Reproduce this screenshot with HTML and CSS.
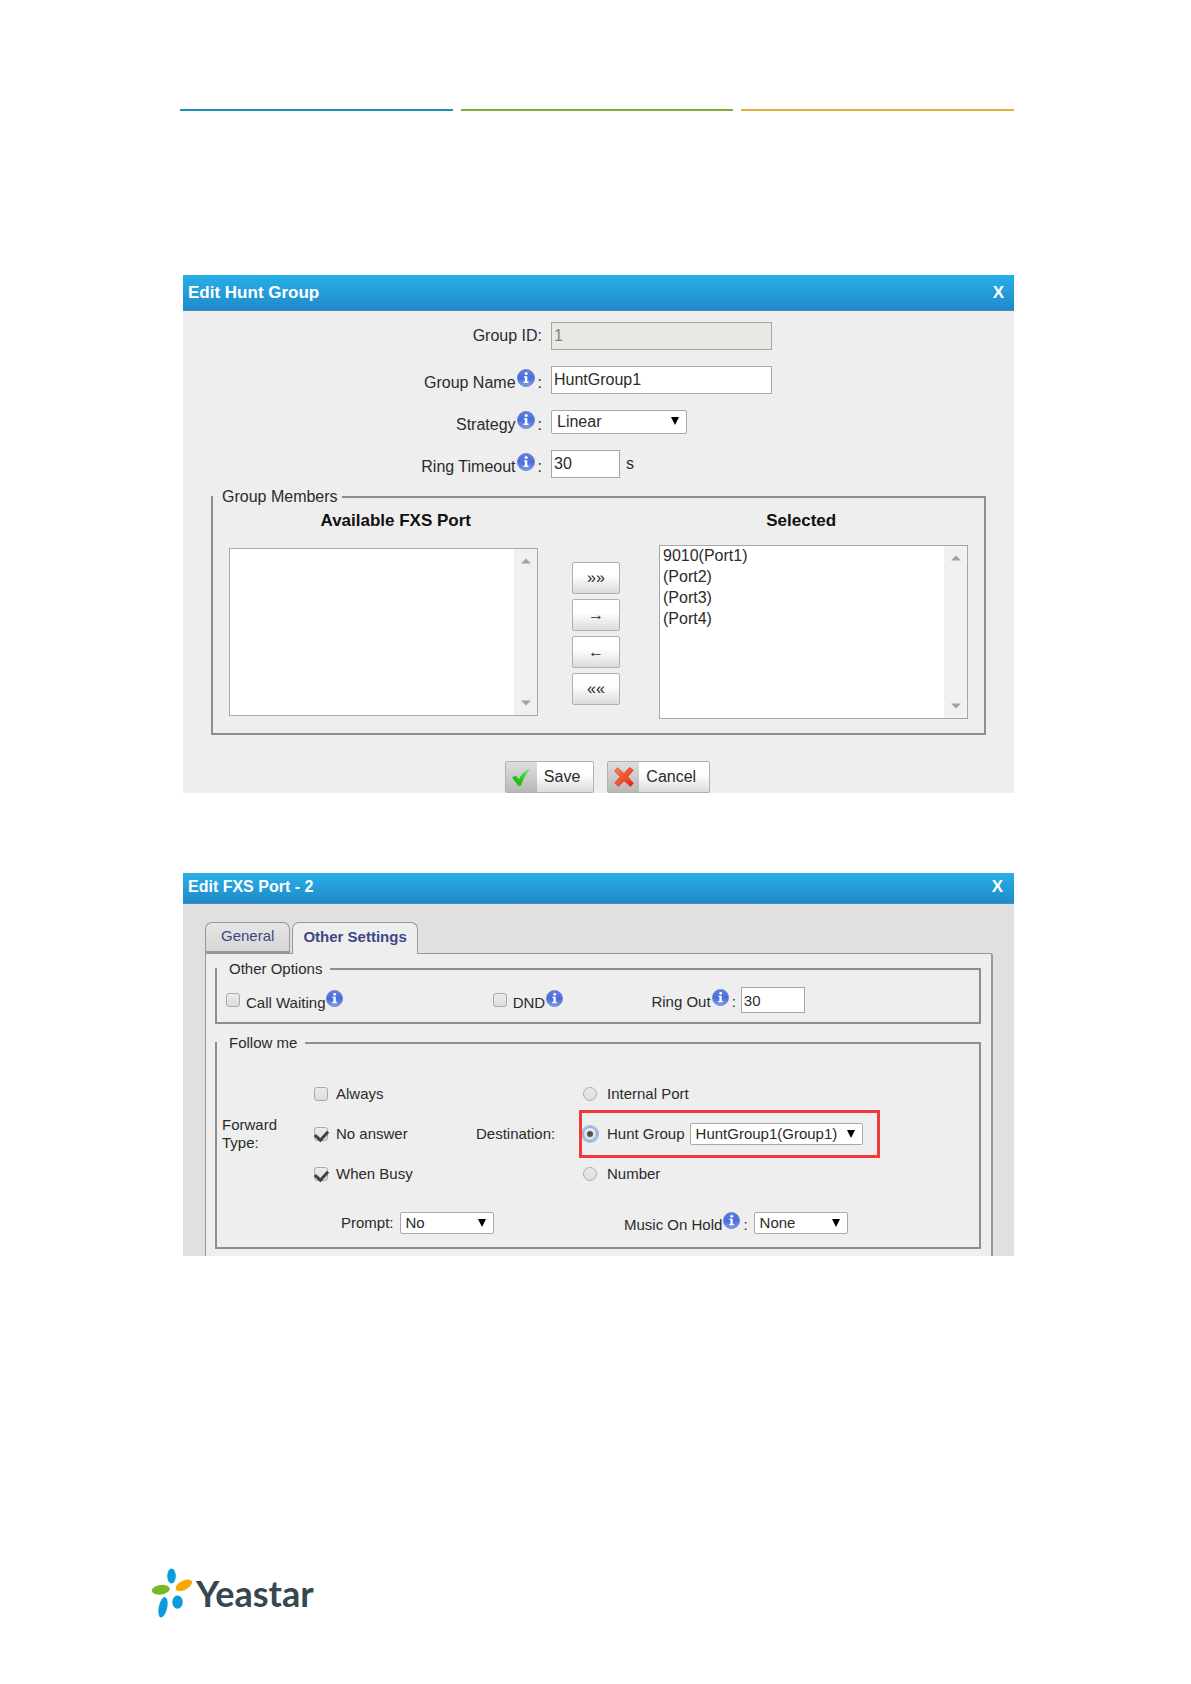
FILE: index.html
```html
<!DOCTYPE html>
<html lang="en">
<head>
    <meta charset="utf-8">
    <title>Hunt Group</title>
    <link rel="stylesheet" href="styles.css">
</head>
<body>
    <svg class="defs" aria-hidden="true">
        <defs>
            <linearGradient id="blue" x1="0" y1="0" x2="0" y2="1">
                <stop offset="0" stop-color="#5f82e6"/>
                <stop offset="0.5" stop-color="#4a6cd8"/>
                <stop offset="1" stop-color="#7f9df4"/>
            </linearGradient>
            <linearGradient id="green" x1="1" y1="0" x2="0" y2="1">
                <stop offset="0" stop-color="#8af07a"/>
                <stop offset="0.5" stop-color="#2ecb1e"/>
                <stop offset="1" stop-color="#17a90d"/>
            </linearGradient>
            <linearGradient id="red" x1="0" y1="0" x2="1" y2="1">
                <stop offset="0" stop-color="#ff8a4a"/>
                <stop offset="1" stop-color="#ea1c0a"/>
            </linearGradient>
        </defs>
        <symbol id="info" viewBox="0 0 18 18">
            <circle cx="9" cy="9" r="8.5" fill="url(#blue)" stroke="#6078c8" stroke-width="0.8"/>
            <circle cx="9.2" cy="4.6" r="1.5" fill="#fff"/>
            <path d="M6.8 7.2h3.5v5.4h1.2v1.3H6.6v-1.3h1.3V8.5H6.8z" fill="#fff"/>
        </symbol>
        <symbol id="up" viewBox="0 0 10 6"><path d="M0 5.5L5 0.5l5 5z" fill="#a3a3a3"/></symbol>
        <symbol id="down" viewBox="0 0 10 6"><path d="M0 0.5L5 5.5l5-5z" fill="#a3a3a3"/></symbol>
    </svg>

    <main class="content">
        <div class="rules">
            <span class="rule rule-blue"></span>
            <span class="rule rule-green"></span>
            <span class="rule rule-yellow"></span>
        </div>

        <section class="panel panel-group">
            <header class="panel-head">
                <h2>Edit Hunt Group</h2>
                <button type="button" class="close">X</button>
            </header>
            <form class="panel-body">
                <div class="fields">
                    <label for="groupId">Group ID:</label>
                    <div><input type="text" id="groupId" class="wide" value="1" disabled></div>
                    <label for="groupName" class="with-info">Group Name<svg class="info"><use href="#info"/></svg>:</label>
                    <div><input type="text" id="groupName" class="wide" value="HuntGroup1"></div>
                    <label for="strategy" class="with-info">Strategy<svg class="info"><use href="#info"/></svg>:</label>
                    <div class="select strategy">
                        <select id="strategy"><option>Linear</option></select>
                    </div>
                    <label for="timeout" class="with-info">Ring Timeout<svg class="info"><use href="#info"/></svg>:</label>
                    <div class="timeout"><input type="text" id="timeout" value="30"><span>s</span></div>
                </div>

                <fieldset class="members">
                    <legend>Group Members</legend>
                    <div class="list-titles">
                        <label for="available">Available FXS Port</label>
                        <label for="selected">Selected</label>
                    </div>
                    <div class="lists">
                        <div class="list list-available">
                            <select id="available" multiple></select>
                            <div class="scroll">
                                <svg><use href="#up"/></svg>
                                <svg><use href="#down"/></svg>
                            </div>
                        </div>
                        <div class="moves">
                            <button type="button">»»</button>
                            <button type="button">→</button>
                            <button type="button">←</button>
                            <button type="button">««</button>
                        </div>
                        <div class="list list-selected">
                            <select id="selected" multiple>
                                <option>9010(Port1)</option>
                                <option>(Port2)</option>
                                <option>(Port3)</option>
                                <option>(Port4)</option>
                            </select>
                            <div class="scroll">
                                <svg><use href="#up"/></svg>
                                <svg><use href="#down"/></svg>
                            </div>
                        </div>
                    </div>
                </fieldset>

                <div class="actions">
                    <button type="button">
                        <span class="icon"><svg viewBox="0 0 20 20"><path d="M1 10.5l4-2 3 4C10 8 13 4 18.5 1.5l0.5 1C15 7 12 12 10 18.5L7.5 19z" fill="url(#green)"/></svg></span>
                        <span class="text">Save</span>
                    </button>
                    <button type="button">
                        <span class="icon"><svg viewBox="0 0 20 20"><path d="M3.5 0.8L10 6.5l5.5-6 3.8 2.7-5.6 6.6 5.8 6.5-3 3.2L10 13.8 4.5 19.4 0.8 16l5.4-6.2L0.6 4z" fill="url(#red)" stroke="#c8402a" stroke-width="0.7"/></svg></span>
                        <span class="text">Cancel</span>
                    </button>
                </div>
            </form>
        </section>

        <section class="panel panel-port">
            <header class="panel-head">
                <h2>Edit FXS Port - 2</h2>
                <button type="button" class="close">X</button>
            </header>
            <form class="panel-body">
                <div class="tabs">
                    <button type="button" class="tab">General</button>
                    <button type="button" class="tab active">Other Settings</button>
                </div>
                <div class="tab-page">
                    <fieldset class="options">
                        <legend>Other Options</legend>
                        <div class="options-row">
                            <div class="check">
                                <input type="checkbox" id="waiting">
                                <label for="waiting" class="with-info">Call Waiting<svg class="info"><use href="#info"/></svg></label>
                            </div>
                            <div class="check">
                                <input type="checkbox" id="dnd">
                                <label for="dnd" class="with-info">DND<svg class="info"><use href="#info"/></svg></label>
                            </div>
                            <div class="ring">
                                <label for="ringOut">Ring Out<svg class="info"><use href="#info"/></svg>:</label>
                                <input type="text" id="ringOut" value="30">
                            </div>
                        </div>
                    </fieldset>

                    <fieldset class="follow">
                        <legend>Follow me</legend>
                        <div class="forward">
                            <span>Forward<br>Type:</span>
                            <div class="stack">
                                <div class="choice"><input type="checkbox" id="always"><label for="always">Always</label></div>
                                <div class="choice"><input type="checkbox" id="noAnswer" checked><label for="noAnswer">No answer</label></div>
                                <div class="choice"><input type="checkbox" id="busy" checked><label for="busy">When Busy</label></div>
                            </div>
                            <span>Destination:</span>
                            <div class="stack">
                                <div class="choice"><input type="radio" name="dest" id="internal"><label for="internal">Internal Port</label></div>
                                <div class="choice marked">
                                    <input type="radio" name="dest" id="hunt" checked><label for="hunt">Hunt Group</label>
                                    <div class="select hunt">
                                        <select aria-label="Hunt Group"><option>HuntGroup1(Group1)</option></select>
                                    </div>
                                </div>
                                <div class="choice"><input type="radio" name="dest" id="number"><label for="number">Number</label></div>
                            </div>
                        </div>
                        <div class="sounds">
                            <div class="sound">
                                <label for="prompt">Prompt:</label>
                                <div class="select short"><select id="prompt"><option>No</option></select></div>
                            </div>
                            <div class="sound">
                                <label for="music">Music On Hold<svg class="info"><use href="#info"/></svg>:</label>
                                <div class="select short"><select id="music"><option>None</option></select></div>
                            </div>
                        </div>
                    </fieldset>
                </div>
            </form>
        </section>
    </main>

    <footer class="footer">
        <svg class="logo" viewBox="0 0 42 50">
            <ellipse cx="19.5" cy="8" rx="4.3" ry="7.6" fill="#0c9bdc"/>
            <ellipse cx="8.8" cy="21.8" rx="9" ry="4.8" transform="rotate(-8 8.8 21.8)" fill="#76b82a"/>
            <ellipse cx="31.8" cy="17.3" rx="9" ry="4.6" transform="rotate(-27 31.8 17.3)" fill="#f7a800"/>
            <ellipse cx="11" cy="39.3" rx="4.2" ry="10.4" transform="rotate(12 11 39.3)" fill="#0c9bdc"/>
            <ellipse cx="25.5" cy="34.2" rx="5.2" ry="6.6" fill="#0c9bdc"/>
        </svg>
        <span class="brand">Yeastar</span>
    </footer>
</body>
</html>
```
FILE: styles.css
```css
* {
    box-sizing: border-box;
}
body {
    margin: 0;
    min-height: 100vh;
    display: flex;
    flex-direction: column;
    background: #fff;
    color: #2b2b2b;
    font-family: "Liberation Sans", Arial, sans-serif;
    font-size: 16px;
    line-height: 20px;
}
.defs {
    position: absolute;
    width: 0;
    height: 0;
}
.content {
    padding: 109px 177px 0 180px;
}
.rules {
    display: flex;
    gap: 8px;
    margin-bottom: 164px;
}
.rule {
    flex: 1;
    height: 2px;
}
.rule-blue {
    background: #1f8fbd;
}
.rule-green {
    background: #82aa3c;
}
.rule-yellow {
    background: #e6b23a;
}

/* panels */
.panel {
    margin-left: 3px;
}
.panel-head {
    display: flex;
    justify-content: space-between;
    align-items: center;
    height: 36px;
    padding: 0 8px 0 5px;
    background: linear-gradient(#27b0e8, #2189c9);
    border-bottom: 1px solid #3f8fc0;
    color: #fff;
}
.panel-head h2 {
    margin: 0;
    font-size: 17px;
}
.close {
    border: none;
    padding: 0 2px;
    background: none;
    color: #fff;
    font: bold 17px "Liberation Sans", Arial, sans-serif;
}
.panel-group .panel-body {
    padding: 11px 28px 0;
    background: #eee;
}
.panel-port {
    margin-top: 80px;
    font-size: 15px;
    line-height: 18px;
}
.panel-port .panel-head {
    height: 31px;
    padding: 0 9px 2px 5px;
}
.panel-port h2 {
    font-size: 16px;
}
.panel-port .panel-body {
    padding: 18px 21px 0 22px;
    background: #e0e0e0;
}

/* controls */
input[type="text"],
select {
    font: inherit;
    color: #2b2b2b;
}
input[type="text"] {
    width: 69px;
    height: 28px;
    padding: 0 2px;
    border: 1px solid #a6a6a6;
    background: #fff;
}
input.wide {
    width: 221px;
}
input[type="text"]:disabled {
    background: #e9e9e2;
    color: #808080;
}
.select {
    position: relative;
}
.select select {
    display: block;
    width: 100%;
    height: 24px;
    padding: 0 5px;
    border: 1px solid #a9a9a9;
    border-radius: 2px;
    background: #fff;
    appearance: none;
}
.select::after {
    content: "";
    position: absolute;
    right: 8px;
    top: 7px;
    border: 4px solid transparent;
    border-top: 8px solid #000;
    border-bottom: none;
    pointer-events: none;
}
.info {
    width: 18px;
    height: 18px;
    margin: 0 3px 1px 1px;
}
.panel-port .info {
    width: 17px;
    height: 17px;
}
.with-info {
    padding-top: 2px;
}
fieldset {
    min-width: 0;
    margin: 0;
    border: 2px solid #8e8e8e;
}

/* hunt group form */
.fields {
    display: grid;
    grid-template-columns: 331px 1fr;
    gap: 16px 9px;
    align-items: center;
}
.fields > label {
    text-align: right;
}
.fields > label.with-info {
    margin: -6px 0;
}
.fields input {
    display: block;
}
.strategy {
    width: 136px;
}
.timeout {
    display: flex;
    align-items: center;
    gap: 6px;
}
.members {
    margin-top: 9px;
    padding: 4px 16px 14px;
}
.members legend {
    margin-left: -16px;
    padding: 0 4px 0 9px;
}
.list-titles {
    display: grid;
    grid-template-columns: 1fr 1fr;
    column-gap: 72px;
    color: #111;
    font-size: 17px;
    font-weight: bold;
    text-align: center;
}
.lists {
    display: grid;
    grid-template-columns: 1fr 121px 1fr;
    align-items: center;
    margin-top: 14px;
}
.list {
    display: flex;
    height: 168px;
    border: 1px solid #a6a6a6;
    background: #fff;
}
.list-selected {
    height: 174px;
}
.list select {
    flex: 1;
    min-width: 0;
    height: 100%;
    padding: 0;
    border: none;
    background: #fff;
    overflow: hidden;
}
.list option {
    min-height: 21px;
    padding: 1px 3px;
}
.scroll {
    display: flex;
    flex-direction: column;
    justify-content: space-between;
    align-items: center;
    width: 23px;
    padding: 9px 0;
    background: #f0f0f0;
}
.scroll svg {
    width: 10px;
    height: 6px;
}
.moves {
    display: flex;
    flex-direction: column;
    align-items: center;
    gap: 5px;
    padding: 2px 5px 0 0;
}
.moves button,
.actions button {
    border: 1px solid #b0b0b0;
    border-radius: 2px;
    background: linear-gradient(#fff 40%, #dcdcdc);
    color: #2b2b2b;
    font: inherit;
}
.moves button {
    width: 48px;
    height: 32px;
    padding: 0;
}
.actions {
    display: flex;
    justify-content: center;
    gap: 13px;
    margin: 26px 0 0 18px;
}
.actions button {
    display: flex;
    height: 32px;
    padding: 0;
}
.icon {
    display: flex;
    align-items: center;
    justify-content: center;
    width: 31px;
    height: 30px;
    background: linear-gradient(#dedede, #b8b8b8);
}
.icon svg {
    width: 20px;
    height: 20px;
}
.text {
    padding: 5px 13px 5px 7px;
}

/* port form */
.tabs {
    display: flex;
    gap: 2px;
}
.tab {
    height: 31px;
    padding: 0 15px 3px;
    border: 1px solid #989898;
    border-bottom-width: 2px;
    border-radius: 7px 7px 0 0;
    background: linear-gradient(#e6e6e6, #d6d6d6);
    color: #3d4785;
    font: inherit;
}
.tab.active {
    height: 32px;
    margin-bottom: -1px;
    padding: 0 10px 4px;
    border-bottom: none;
    background: #eee;
    font-weight: bold;
    position: relative;
}
.tab-page {
    padding: 6px 10px 7px 9px;
    border: 1px solid #989898;
    border-right-width: 2px;
    border-bottom: none;
    border-radius: 0 3px 0 0;
    background: #eee;
}
.tab-page legend {
    padding: 0 8px 0 12px;
}
.tab-page input[type="text"] {
    width: 64px;
    height: 26px;
}
.tab-page .select select {
    height: 22px;
    padding: 0 5px;
}
.options {
    padding: 9px 0;
}
.options-row {
    display: grid;
    grid-template-columns: 267fr 159fr 328fr;
    align-items: center;
    padding-left: 9px;
}
.check,
.ring,
.choice,
.sound {
    display: flex;
    align-items: center;
}
.check,
.sound {
    gap: 6px;
}
.ring {
    gap: 5px;
}
.check label,
.ring label,
.sound label {
    margin-top: -4px;
    margin-bottom: -4px;
}
input[type="checkbox"],
input[type="radio"] {
    display: grid;
    place-items: center;
    flex: none;
    width: 14px;
    height: 14px;
    margin: 0;
    border: 1px solid #acacac;
    border-radius: 3px;
    background: linear-gradient(#ececec, #dcdcdc);
    appearance: none;
}
input[type="radio"] {
    border-radius: 50%;
}
input[type="checkbox"]:checked::after {
    content: "";
    width: 6px;
    height: 10px;
    margin-bottom: 4px;
    border: solid #404040;
    border-width: 0 3px 3px 0;
    transform: rotate(42deg);
}
input[type="radio"]:checked {
    outline: 2px solid #9bbcf0;
    border-color: #8f9db5;
}
input[type="radio"]:checked::after {
    content: "";
    width: 6px;
    height: 6px;
    border-radius: 50%;
    background: #505050;
}
.follow {
    margin-top: 10px;
    padding: 22px 0 13px;
}
.forward {
    display: grid;
    grid-template-columns: 92px 162px 107px 1fr;
    align-items: center;
    padding-left: 5px;
}
.stack {
    display: flex;
    flex-direction: column;
    align-items: flex-start;
}
.choice {
    height: 40px;
    gap: 8px;
}
input[type="radio"] + label {
    margin-left: 2px;
}
.marked {
    padding-right: 13px;
    outline: 3px solid #f0393c;
    outline-offset: 1px;
}
.hunt {
    width: 173px;
    margin-left: -3px;
}
.short {
    width: 94px;
}
.sounds {
    display: grid;
    grid-template-columns: 283px 1fr;
    padding-left: 124px;
    margin-top: 18px;
}

/* footer */
.footer {
    display: flex;
    align-items: center;
    gap: 2px;
    margin-top: auto;
    padding: 0 152px 66px;
}
.logo {
    width: 42px;
    height: 50px;
}
.brand {
    color: #36474f;
    font: bold 36px/50px Lato, sans-serif;
}
```
